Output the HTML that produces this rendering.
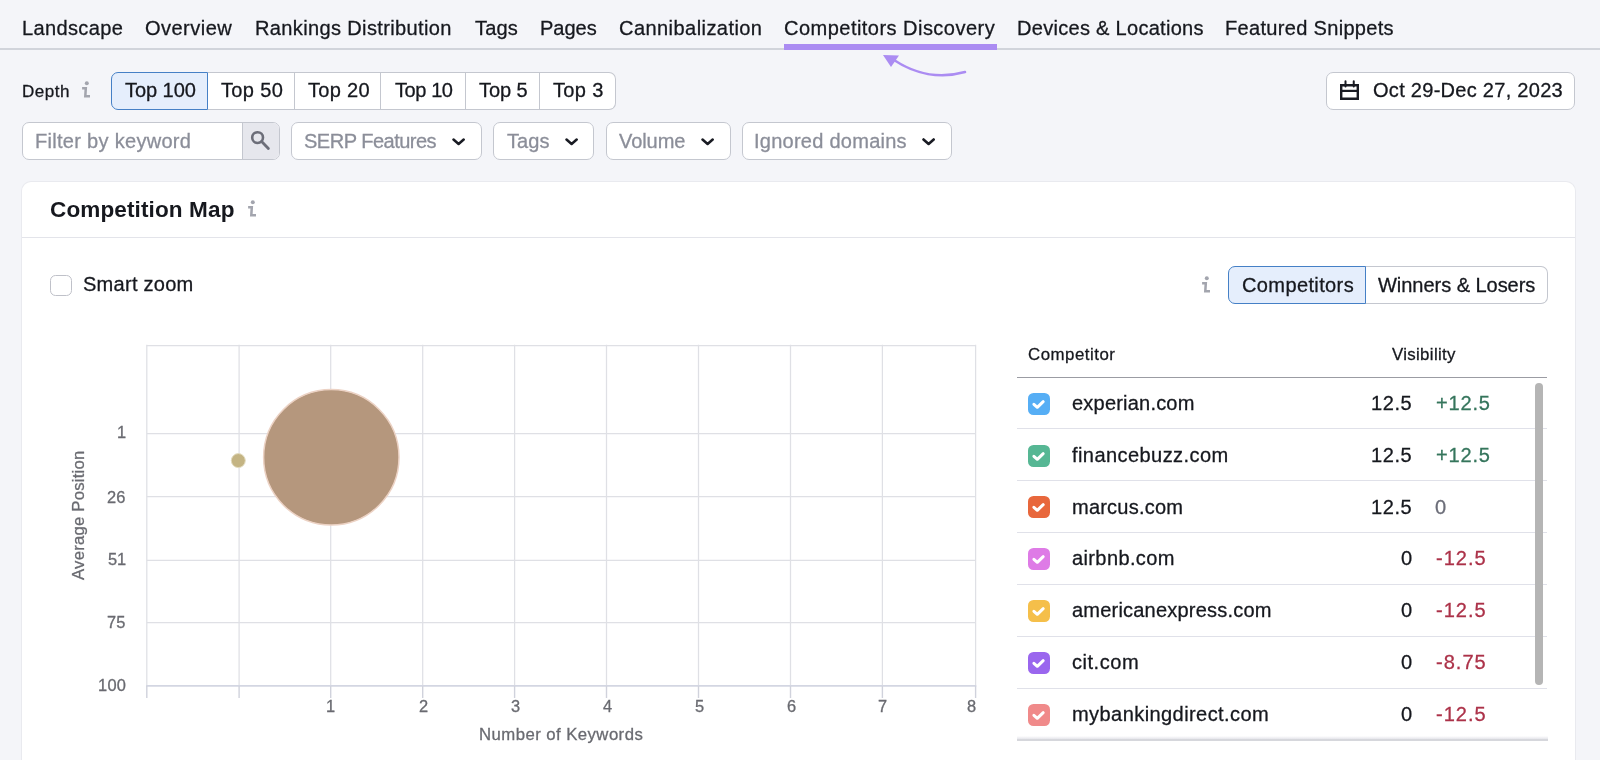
<!DOCTYPE html>
<html lang="en">
<head>
<meta charset="utf-8">
<title>Competitors Discovery</title>
<style>
*{box-sizing:border-box;margin:0;padding:0}
html,body{width:1600px;height:760px;overflow:hidden;background:#f4f5f9;font-family:"Liberation Sans",Arial,sans-serif;color:#16181e}
.abs{position:absolute}
#root{position:relative;width:1600px;height:760px;overflow:hidden;will-change:transform}
.tab{position:absolute;top:17px;font-size:19.3px;line-height:24px;white-space:nowrap;color:#16181e}
.tabline{position:absolute;left:0;top:48px;width:1600px;height:2px;background:#d1d4db}
.tabactive{position:absolute;left:783.5px;top:43.5px;width:213px;height:6.3px;background:#ab8cf2}
.lbl{position:absolute;white-space:nowrap}
.tab,.lbl,.st,.ph{transform:scaleX(1.04);transform-origin:0 50%;-webkit-text-stroke:0.28px}
#ttl{-webkit-text-stroke:0}
.seg{position:absolute;top:72px;height:38px;background:#fff;border:1px solid #c4c7cf;border-left:none;font-size:19.3px;line-height:36px;text-align:center;white-space:nowrap}
.st{position:absolute;top:0.2px;white-space:nowrap}
.ax{font-size:15.8px;line-height:20px;color:#696a70}
.box{position:absolute;background:#fff;border:1px solid #c4c7cf;border-radius:7px}
.ph{color:#8b8e99;font-size:19.3px;line-height:36px;position:absolute;top:0.7px;white-space:nowrap}
.chev{position:absolute;top:15.2px}
</style>
</head>
<body>
<div id="root">
<!-- TABS -->
<div class="tabline"></div>
<div class="tab" id="t1" style="left:21.85px;letter-spacing:0.322px">Landscape</div>
<div class="tab" id="t2" style="left:145.48px;letter-spacing:0.432px">Overview</div>
<div class="tab" id="t3" style="left:255.01px;letter-spacing:0.330px">Rankings Distribution</div>
<div class="tab" id="t4" style="left:474.60px;letter-spacing:0.134px">Tags</div>
<div class="tab" id="t5" style="left:540.04px;letter-spacing:-0.045px">Pages</div>
<div class="tab" id="t6" style="left:619.27px;letter-spacing:0.405px">Cannibalization</div>
<div class="tab" id="t7" style="left:784.44px;letter-spacing:0.431px">Competitors Discovery</div>
<div class="tab" id="t8" style="left:1017.01px;letter-spacing:0.261px">Devices &amp; Locations</div>
<div class="tab" id="t9" style="left:1224.90px;letter-spacing:0.286px">Featured Snippets</div>
<div class="tabactive"></div>
<svg class="abs" style="left:870px;top:50px" width="110" height="34" viewBox="0 0 110 34"><path d="M95 22 C70 29 45 24 24 10" fill="none" stroke="#ab8cf2" stroke-width="2.6" stroke-linecap="round"/><path d="M13 5 L29 5.5 L21 17 Z" fill="#ab8cf2"/></svg>

<!-- DEPTH ROW -->
<div class="lbl" id="depth" style="margin-top:1.3px;left:22.38px;top:79px;font-size:16.4px;line-height:22px;letter-spacing:0.480px">Depth</div>
<svg class="abs" style="left:81px;top:80px" width="10" height="18" viewBox="0 0 10 18"><circle cx="5.8" cy="3.2" r="2" fill="#a3a5ae"/><path d="M1.1 8.2 H4.8 L4.3 16.3 H9" fill="none" stroke="#a3a5ae" stroke-width="2.5" stroke-linejoin="miter"/></svg>
<div class="seg" id="s0" style="left:111px;width:97px;background:#e5eefc;border:1.5px solid #4580c6;border-radius:7px 0 0 7px;line-height:35px;z-index:2;"><span class="st" id="s0t" style="left:13.14px;letter-spacing:-0.075px">Top 100</span></div>
<div class="seg" id="s1" style="left:208px;width:87px;"><span class="st" id="s1t" style="left:13.38px;letter-spacing:0.312px">Top 50</span></div>
<div class="seg" id="s2" style="left:295px;width:86px;"><span class="st" id="s2t" style="left:12.97px;letter-spacing:0.255px">Top 20</span></div>
<div class="seg" id="s3" style="left:381px;width:85px;"><span class="st" id="s3t" style="left:13.69px;letter-spacing:-0.424px">Top 10</span></div>
<div class="seg" id="s4" style="left:466px;width:74px;"><span class="st" id="s4t" style="left:12.91px;letter-spacing:-0.109px">Top 5</span></div>
<div class="seg" id="s5" style="left:540px;width:76px;border-radius:0 7px 7px 0;"><span class="st" id="s5t" style="left:12.97px;letter-spacing:0.300px">Top 3</span></div>

<div class="box" style="left:1326px;top:72px;width:249px;height:38px">
<svg class="abs" style="left:13px;top:7px" width="22" height="22" viewBox="0 0 22 22"><path d="M1.2 5.2 H17.8 V18.8 H1.2 Z" fill="none" stroke="#191b23" stroke-width="2.4"/><path d="M1.2 10.9 H17.8" stroke="#191b23" stroke-width="2.2"/><path d="M5.5 1.3 V6.5 M13.75 1.3 V6.5" stroke="#191b23" stroke-width="2" stroke-linecap="round"/></svg>
<div class="lbl" id="datetxt" style="left:45.57px;top:0;font-size:19.3px;line-height:36px;letter-spacing:0.253px">Oct 29-Dec 27, 2023</div>
</div>
<div class="box" style="left:22px;top:122px;width:258px;height:38px;overflow:hidden">
<div class="ph" id="f0" style="left:11.57px;letter-spacing:0.266px">Filter by keyword</div>
<div class="abs" style="left:219px;top:0;width:38px;height:36px;background:#e6e7ed;border-left:1px solid #c4c7cf"></div>
<svg class="abs" style="left:225.2px;top:5.2px" width="24" height="24" viewBox="0 0 24 24"><circle cx="9.6" cy="9.6" r="5.4" fill="none" stroke="#6c6e79" stroke-width="2.6"/><path d="M13.6 13.6 L20.4 20.6" stroke="#6c6e79" stroke-width="2.8" stroke-linecap="round"/></svg>
</div>
<div class="box" style="left:291px;top:122px;width:191px;height:38px"><div class="ph" id="f1" style="left:11.84px;letter-spacing:-0.505px">SERP Features</div><svg class="chev" style="left:160.2px" width="14" height="9" viewBox="0 0 14 9"><path d="M1.5 1.5 L6.6 6 L11.7 1.5" fill="none" stroke="#191b23" stroke-width="2.5" stroke-linecap="round" stroke-linejoin="round"/></svg></div>
<div class="box" style="left:493px;top:122px;width:101px;height:38px"><div class="ph" id="f2" style="left:12.76px;letter-spacing:0.066px">Tags</div><svg class="chev" style="left:70.6px" width="14" height="9" viewBox="0 0 14 9"><path d="M1.5 1.5 L6.6 6 L11.7 1.5" fill="none" stroke="#191b23" stroke-width="2.5" stroke-linecap="round" stroke-linejoin="round"/></svg></div>
<div class="box" style="left:606px;top:122px;width:125px;height:38px"><div class="ph" id="f3" style="left:12.17px;letter-spacing:-0.090px">Volume</div><svg class="chev" style="left:94.2px" width="14" height="9" viewBox="0 0 14 9"><path d="M1.5 1.5 L6.6 6 L11.7 1.5" fill="none" stroke="#191b23" stroke-width="2.5" stroke-linecap="round" stroke-linejoin="round"/></svg></div>
<div class="box" style="left:742px;top:122px;width:210px;height:38px"><div class="ph" id="f4" style="left:10.58px;letter-spacing:0.224px">Ignored domains</div><svg class="chev" style="left:179.2px" width="14" height="9" viewBox="0 0 14 9"><path d="M1.5 1.5 L6.6 6 L11.7 1.5" fill="none" stroke="#191b23" stroke-width="2.6" stroke-linecap="round" stroke-linejoin="round"/></svg></div>

<div class="abs" id="panel" style="left:22px;top:182px;width:1553px;height:600px;background:#fff;border-radius:9px;box-shadow:0 0 0 1px #e9eaef"></div>
<div class="abs" style="left:22px;top:237.3px;width:1553px;height:1px;background:#e3e4ea"></div>
<div class="lbl" id="ttl" style="margin-top:0.5px;left:50.22px;top:196px;font-size:21.7px;line-height:26px;font-weight:bold;letter-spacing:0.104px">Competition Map</div>
<svg class="abs" style="left:247.3px;top:198.8px" width="10" height="18" viewBox="0 0 10 18"><circle cx="5.8" cy="3.2" r="2" fill="#a3a5ae"/><path d="M1.1 8.2 H4.8 L4.3 16.3 H9" fill="none" stroke="#a3a5ae" stroke-width="2.5" stroke-linejoin="miter"/></svg>
<div class="abs" style="left:50px;top:274.8px;width:21.5px;height:21.5px;border:1px solid #bfc1c9;border-radius:5.5px;background:#fff"></div>
<div class="lbl" id="sz" style="left:82.60px;top:273px;font-size:19.3px;line-height:24px;letter-spacing:0.239px">Smart zoom</div>
<svg class="abs" style="left:1201px;top:274.6px" width="10" height="18" viewBox="0 0 10 18"><circle cx="5.8" cy="3.2" r="2" fill="#a3a5ae"/><path d="M1.1 8.2 H4.8 L4.3 16.3 H9" fill="none" stroke="#a3a5ae" stroke-width="2.5" stroke-linejoin="miter"/></svg>
<div class="seg" id="g0" style="left:1228px;top:266.4px;width:138px;background:#e5eefc;border:1.5px solid #4580c6;border-radius:7px 0 0 7px;line-height:35px;z-index:2"><span class="st" id="g0t" style="top:0.9px;left:12.57px;letter-spacing:0.345px">Competitors</span></div>
<div class="seg" id="g1" style="left:1365px;top:266.4px;width:183px;border-radius:0 7px 7px 0"><span class="st" id="g1t" style="top:0.9px;left:13.21px;letter-spacing:-0.058px">Winners &amp; Losers</span></div>
<svg class="abs" style="left:0;top:320px" width="1000" height="440" viewBox="0 320 1000 440">
<line x1="146.8" y1="344.8" x2="146.8" y2="686" stroke="#dfe0e5" stroke-width="1.25"/>
<line x1="239.1" y1="344.8" x2="239.1" y2="686" stroke="#dfe0e5" stroke-width="1.25"/>
<line x1="330.7" y1="344.8" x2="330.7" y2="686" stroke="#dfe0e5" stroke-width="1.25"/>
<line x1="422.7" y1="344.8" x2="422.7" y2="686" stroke="#dfe0e5" stroke-width="1.25"/>
<line x1="514.6" y1="344.8" x2="514.6" y2="686" stroke="#dfe0e5" stroke-width="1.25"/>
<line x1="606.5" y1="344.8" x2="606.5" y2="686" stroke="#dfe0e5" stroke-width="1.25"/>
<line x1="698.5" y1="344.8" x2="698.5" y2="686" stroke="#dfe0e5" stroke-width="1.25"/>
<line x1="790.5" y1="344.8" x2="790.5" y2="686" stroke="#dfe0e5" stroke-width="1.25"/>
<line x1="882.4" y1="344.8" x2="882.4" y2="686" stroke="#dfe0e5" stroke-width="1.25"/>
<line x1="975.6" y1="344.8" x2="975.6" y2="686" stroke="#dfe0e5" stroke-width="1.25"/>
<line x1="146.8" y1="345.5" x2="975.6" y2="345.5" stroke="#dfe0e5" stroke-width="1.25"/>
<line x1="146.8" y1="433.6" x2="975.6" y2="433.6" stroke="#dfe0e5" stroke-width="1.25"/>
<line x1="146.8" y1="496.6" x2="975.6" y2="496.6" stroke="#dfe0e5" stroke-width="1.25"/>
<line x1="146.8" y1="560.3" x2="975.6" y2="560.3" stroke="#dfe0e5" stroke-width="1.25"/>
<line x1="146.8" y1="622.6" x2="975.6" y2="622.6" stroke="#dfe0e5" stroke-width="1.25"/>
<line x1="146.1" y1="685.9" x2="976.3" y2="685.9" stroke="#d3d6e2" stroke-width="1.7"/>
<line x1="146.8" y1="686" x2="146.8" y2="698" stroke="#d0d2dc" stroke-width="1.4"/>
<line x1="239.1" y1="686" x2="239.1" y2="698" stroke="#d0d2dc" stroke-width="1.4"/>
<line x1="330.7" y1="686" x2="330.7" y2="698" stroke="#d0d2dc" stroke-width="1.4"/>
<line x1="422.7" y1="686" x2="422.7" y2="698" stroke="#d0d2dc" stroke-width="1.4"/>
<line x1="514.6" y1="686" x2="514.6" y2="698" stroke="#d0d2dc" stroke-width="1.4"/>
<line x1="606.5" y1="686" x2="606.5" y2="698" stroke="#d0d2dc" stroke-width="1.4"/>
<line x1="698.5" y1="686" x2="698.5" y2="698" stroke="#d0d2dc" stroke-width="1.4"/>
<line x1="790.5" y1="686" x2="790.5" y2="698" stroke="#d0d2dc" stroke-width="1.4"/>
<line x1="882.4" y1="686" x2="882.4" y2="698" stroke="#d0d2dc" stroke-width="1.4"/>
<line x1="975.6" y1="686" x2="975.6" y2="698" stroke="#d0d2dc" stroke-width="1.4"/>
<circle cx="331.3" cy="457.3" r="67.7" fill="#b5977d" stroke="#ecd2c4" stroke-width="1.5"/>
<circle cx="238.3" cy="460.6" r="7" fill="#c4b483" stroke="#e3dcc0" stroke-width="1"/>
</svg>
<div class="lbl ax" id="y0" style="left:117.21px;top:423.3px">1</div>
<div class="lbl ax" id="y1" style="left:106.8px;top:488.3px">26</div>
<div class="lbl ax" id="y2" style="left:107.99px;top:550.4px;letter-spacing:-0.124px">51</div>
<div class="lbl ax" id="y3" style="left:106.8px;top:612.5px">75</div>
<div class="lbl ax" id="y4" style="left:97.66px;top:676.3px;letter-spacing:0.236px">100</div>
<div class="lbl ax" id="x0" style="left:326.26px;top:697.2px">1</div>
<div class="lbl ax" id="x1" style="left:419.2px;top:697.2px">2</div>
<div class="lbl ax" id="x2" style="left:511.1px;top:697.2px">3</div>
<div class="lbl ax" id="x3" style="left:602.6px;top:697.2px">4</div>
<div class="lbl ax" id="x4" style="left:694.7px;top:697.2px">5</div>
<div class="lbl ax" id="x5" style="left:786.8px;top:697.2px">6</div>
<div class="lbl ax" id="x6" style="left:878.23px;top:697.2px">7</div>
<div class="lbl ax" id="x7" style="left:966.5px;top:697.2px">8</div>
<div class="lbl ax" id="xl" style="left:479.35px;top:724.4px;font-size:16.1px;letter-spacing:0.423px">Number of Keywords</div>
<div class="abs" id="ylw" style="left:68px;top:579.5px;width:130px;height:20px;transform:rotate(-90deg);transform-origin:0 0"><div class="lbl ax" id="yl" style="left:0px;top:0px;font-size:16.1px;letter-spacing:0.2px">Average Position</div></div>
<div class="lbl" id="h0" style="left:1027.86px;top:344px;font-size:16.2px;line-height:20px;letter-spacing:0.486px">Competitor</div>
<div class="lbl" id="h1" style="left:1391.91px;top:344px;font-size:16.2px;line-height:20px;letter-spacing:0.313px">Visibility</div>
<div class="abs" style="left:1017px;top:376.8px;width:530px;height:1.3px;background:#9b9ca3"></div>
<div class="abs" style="left:1027.6px;top:392.7px;width:22px;height:22px;border-radius:5.5px;background:#56aef5"><svg width="22" height="22" viewBox="0 0 22 22" style="display:block"><path d="M5.9 11.3 L9.3 14.3 L15.2 8.7" fill="none" stroke="#fff" stroke-width="3" stroke-linecap="round" stroke-linejoin="round"/></svg></div>
<div class="lbl" id="d0" style="left:1072.44px;top:391.9px;font-size:19.3px;line-height:24px;letter-spacing:0.178px">experian.com</div>
<div class="lbl" id="v0" style="left:1370.75px;top:391.9px;font-size:19.3px;line-height:24px;letter-spacing:0.532px">12.5</div>
<div class="lbl" id="c0" style="left:1435.52px;top:391.9px;font-size:19.3px;line-height:24px;color:#35755c;letter-spacing:0.782px">+12.5</div>
<div class="abs" style="left:1017px;top:428.3px;width:530px;height:1px;background:#e0e1e9"></div>
<div class="abs" style="left:1027.6px;top:444.6px;width:22px;height:22px;border-radius:5.5px;background:#56b794"><svg width="22" height="22" viewBox="0 0 22 22" style="display:block"><path d="M5.9 11.3 L9.3 14.3 L15.2 8.7" fill="none" stroke="#fff" stroke-width="3" stroke-linecap="round" stroke-linejoin="round"/></svg></div>
<div class="lbl" id="d1" style="left:1071.80px;top:443.8px;font-size:19.3px;line-height:24px;letter-spacing:0.394px">financebuzz.com</div>
<div class="lbl" id="v1" style="left:1370.75px;top:443.8px;font-size:19.3px;line-height:24px;letter-spacing:0.532px">12.5</div>
<div class="lbl" id="c1" style="left:1435.52px;top:443.8px;font-size:19.3px;line-height:24px;color:#35755c;letter-spacing:0.782px">+12.5</div>
<div class="abs" style="left:1017px;top:480.1px;width:530px;height:1px;background:#e0e1e9"></div>
<div class="abs" style="left:1027.6px;top:496.4px;width:22px;height:22px;border-radius:5.5px;background:#e8673c"><svg width="22" height="22" viewBox="0 0 22 22" style="display:block"><path d="M5.9 11.3 L9.3 14.3 L15.2 8.7" fill="none" stroke="#fff" stroke-width="3" stroke-linecap="round" stroke-linejoin="round"/></svg></div>
<div class="lbl" id="d2" style="left:1071.92px;top:495.6px;font-size:19.3px;line-height:24px;letter-spacing:0.186px">marcus.com</div>
<div class="lbl" id="v2" style="left:1370.75px;top:495.6px;font-size:19.3px;line-height:24px;letter-spacing:0.532px">12.5</div>
<div class="lbl" id="c2" style="left:1435.03px;top:495.6px;font-size:19.3px;line-height:24px;color:#6c6e79;letter-spacing:0.000px">0</div>
<div class="abs" style="left:1017px;top:531.9px;width:530px;height:1px;background:#e0e1e9"></div>
<div class="abs" style="left:1027.6px;top:548.2px;width:22px;height:22px;border-radius:5.5px;background:#de7be6"><svg width="22" height="22" viewBox="0 0 22 22" style="display:block"><path d="M5.9 11.3 L9.3 14.3 L15.2 8.7" fill="none" stroke="#fff" stroke-width="3" stroke-linecap="round" stroke-linejoin="round"/></svg></div>
<div class="lbl" id="d3" style="left:1072.36px;top:547.4px;font-size:19.3px;line-height:24px;letter-spacing:0.346px">airbnb.com</div>
<div class="lbl" id="v3" style="left:1400.70px;top:547.4px;font-size:19.3px;line-height:24px">0</div>
<div class="lbl" id="c3" style="left:1435.59px;top:547.4px;font-size:19.3px;line-height:24px;color:#ac3249;letter-spacing:0.965px">-12.5</div>
<div class="abs" style="left:1017px;top:583.8px;width:530px;height:1px;background:#e0e1e9"></div>
<div class="abs" style="left:1027.6px;top:600.1px;width:22px;height:22px;border-radius:5.5px;background:#f5bf4a"><svg width="22" height="22" viewBox="0 0 22 22" style="display:block"><path d="M5.9 11.3 L9.3 14.3 L15.2 8.7" fill="none" stroke="#fff" stroke-width="3" stroke-linecap="round" stroke-linejoin="round"/></svg></div>
<div class="lbl" id="d4" style="left:1072.36px;top:599.3px;font-size:19.3px;line-height:24px;letter-spacing:0.178px">americanexpress.com</div>
<div class="lbl" id="v4" style="left:1400.70px;top:599.3px;font-size:19.3px;line-height:24px">0</div>
<div class="lbl" id="c4" style="left:1435.59px;top:599.3px;font-size:19.3px;line-height:24px;color:#ac3249;letter-spacing:0.965px">-12.5</div>
<div class="abs" style="left:1017px;top:635.6px;width:530px;height:1px;background:#e0e1e9"></div>
<div class="abs" style="left:1027.6px;top:651.9px;width:22px;height:22px;border-radius:5.5px;background:#9a66ee"><svg width="22" height="22" viewBox="0 0 22 22" style="display:block"><path d="M5.9 11.3 L9.3 14.3 L15.2 8.7" fill="none" stroke="#fff" stroke-width="3" stroke-linecap="round" stroke-linejoin="round"/></svg></div>
<div class="lbl" id="d5" style="left:1072.26px;top:651.1px;font-size:19.3px;line-height:24px;letter-spacing:0.499px">cit.com</div>
<div class="lbl" id="v5" style="left:1400.70px;top:651.1px;font-size:19.3px;line-height:24px">0</div>
<div class="lbl" id="c5" style="left:1435.59px;top:651.1px;font-size:19.3px;line-height:24px;color:#ac3249;letter-spacing:0.965px">-8.75</div>
<div class="abs" style="left:1017px;top:687.5px;width:530px;height:1px;background:#e0e1e9"></div>
<div class="abs" style="left:1027.6px;top:703.8px;width:22px;height:22px;border-radius:5.5px;background:#f08a8a"><svg width="22" height="22" viewBox="0 0 22 22" style="display:block"><path d="M5.9 11.3 L9.3 14.3 L15.2 8.7" fill="none" stroke="#fff" stroke-width="3" stroke-linecap="round" stroke-linejoin="round"/></svg></div>
<div class="lbl" id="d6" style="left:1071.92px;top:703.0px;font-size:19.3px;line-height:24px;letter-spacing:0.387px">mybankingdirect.com</div>
<div class="lbl" id="v6" style="left:1400.70px;top:703.0px;font-size:19.3px;line-height:24px">0</div>
<div class="lbl" id="c6" style="left:1435.59px;top:703.0px;font-size:19.3px;line-height:24px;color:#ac3249;letter-spacing:0.965px">-12.5</div>
<div class="abs" style="left:1016.5px;top:735.5px;width:531px;height:3.5px;background:linear-gradient(to bottom,rgba(220,221,228,0),rgba(220,221,228,0.75))"></div>
<div class="abs" style="left:1016.5px;top:739px;width:531px;height:2.4px;background:#d6d7dc"></div>
<div class="abs" style="left:1535px;top:383px;width:8px;height:302px;border-radius:4px;background:#b5b5b5"></div>

</div>
</body>
</html>
